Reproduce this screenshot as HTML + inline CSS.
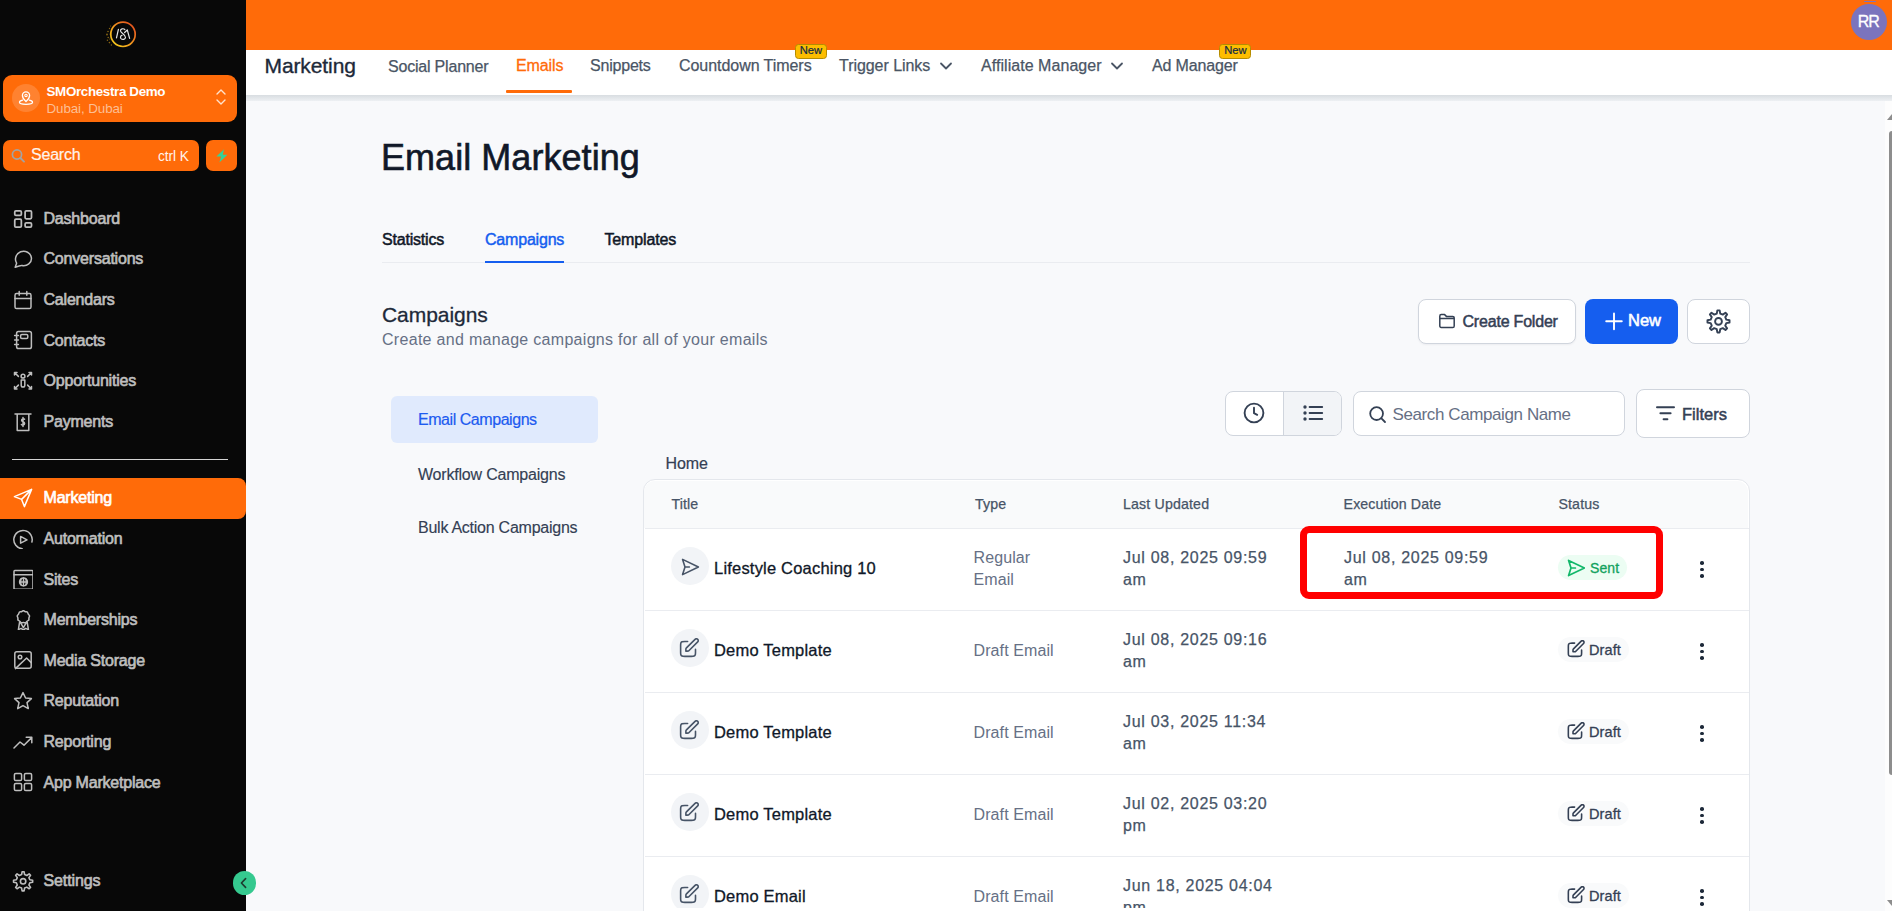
<!DOCTYPE html>
<html><head><meta charset="utf-8"><title>Email Marketing</title>
<style>
html,body{margin:0;padding:0;width:1892px;height:911px;overflow:hidden;background:#f8f9fb}
body{position:relative;font-family:"Liberation Sans", sans-serif}
.t{position:absolute;white-space:nowrap;line-height:1;font-family:"Liberation Sans", sans-serif}
svg{display:block}
</style></head><body>
<div style="position:absolute;left:0px;top:0px;width:1892px;height:911px;background:#f8f9fb"></div>
<div style="position:absolute;left:0px;top:0px;width:246px;height:911px;background:#080808"></div>
<svg style="position:absolute;left:100px;top:18px;" width="40" height="34" viewBox="0 0 40 34" fill="none">
<defs><linearGradient id="lg" x1="0.9" y1="0.1" x2="0.1" y2="0.9"><stop offset="0" stop-color="#e4521e"/><stop offset="0.55" stop-color="#f29a1f"/><stop offset="1" stop-color="#f4c81c"/></linearGradient></defs>
<g fill="#f2b21c" opacity="0.55"><circle cx="9.5" cy="10.5" r="0.7"/><circle cx="8" cy="13.5" r="0.8"/><circle cx="7" cy="16.5" r="0.9"/><circle cx="8.2" cy="19.5" r="0.8"/><circle cx="7.4" cy="22.2" r="0.7"/><circle cx="9.4" cy="24.6" r="0.8"/><circle cx="11.4" cy="27" r="0.7"/><circle cx="10" cy="16" r="0.6"/><circle cx="9.8" cy="21" r="0.6"/><circle cx="10.5" cy="8" r="0.5"/></g>
<circle cx="23" cy="16.3" r="12.2" stroke="url(#lg)" stroke-width="1.7"/>
<g stroke="#e8e8e8" stroke-width="1.2" stroke-linecap="round" stroke-linejoin="round">
<path d="M16.5 19.8 L18.4 11.3"/>
<path d="M24.8 11.5 C23.5 10.2 20.2 10.6 20.5 13 C20.8 15 25.8 16.5 25.5 19.5 C25.3 21.5 22.5 22 21 20.6 C20 19.6 20.6 17.6 22 17.3"/>
<path d="M24.6 14.5 L27.3 12 L29.6 20.4"/>
</g>
</svg>
<div style="position:absolute;left:3px;top:75px;width:234px;height:47px;background:#ff6b09;border-radius:9px"></div>
<div style="position:absolute;left:11.5px;top:83.5px;width:28.5px;height:28.5px;background:rgba(255,255,255,0.16);border-radius:50%"></div>
<svg style="position:absolute;left:17px;top:89px;" width="18" height="18" viewBox="0 0 18 18" fill="none"><path d="M9 12.5 C9 12.5 12.6 9.2 12.6 6.4 A3.6 3.6 0 0 0 5.4 6.4 C5.4 9.2 9 12.5 9 12.5Z" stroke="#fff" stroke-width="1.3"/><circle cx="9" cy="6.4" r="1.2" stroke="#fff" stroke-width="1.1"/><path d="M5.6 11.2 C3.5 11.7 2.5 12.4 2.5 13.2 C2.5 14.5 5.4 15.3 9 15.3 C12.6 15.3 15.5 14.5 15.5 13.2 C15.5 12.4 14.5 11.7 12.4 11.2" stroke="#fff" stroke-width="1.3" stroke-linecap="round"/></svg>
<div class="t" style="left:46.5px;top:85.16px;font-size:13.4px;color:#fff;font-weight:700;letter-spacing:-0.35px;">SMOrchestra Demo</div>
<div class="t" style="left:46.5px;top:102.46px;font-size:13.4px;color:#fdbf94;font-weight:400;letter-spacing:-0.1px;">Dubai, Dubai</div>
<svg style="position:absolute;left:214px;top:86px;" width="14" height="22" viewBox="0 0 14 22" fill="none"><path d="M3 8 L7 4 L11 8" stroke="#ffe2cc" stroke-width="1.4" stroke-linecap="round" stroke-linejoin="round"/><path d="M3 14 L7 18 L11 14" stroke="#ffe2cc" stroke-width="1.4" stroke-linecap="round" stroke-linejoin="round"/></svg>
<div style="position:absolute;left:3px;top:140px;width:196px;height:31px;background:#ff6b09;border-radius:7px"></div>
<svg style="position:absolute;left:10px;top:147px;" width="16" height="18" viewBox="0 0 16 18" fill="none"><circle cx="7" cy="7.5" r="4.6" stroke="#a3a3a3" stroke-width="1.7"/><path d="M10.4 11 L14 14.6" stroke="#a3a3a3" stroke-width="1.9" stroke-linecap="round"/></svg>
<div class="t" style="left:31px;top:146.86px;font-size:16px;color:#fff4ec;font-weight:400;letter-spacing:-0.2px;-webkit-text-stroke:0.2px #fff4ec">Search</div>
<div class="t" style="left:158px;top:149.52px;font-size:13.8px;color:#fff4ec;font-weight:400;letter-spacing:-0.1px;">ctrl K</div>
<div style="position:absolute;left:206px;top:140px;width:31px;height:31px;background:#ff6b09;border-radius:7px"></div>
<svg style="position:absolute;left:215.5px;top:148.5px;" width="12" height="14" viewBox="0 0 12 14" fill="none"><path d="M8 0.3 L0.4 7.4 H5 L3.4 13.6 L11.4 5.8 H6.8 Z" fill="#34d399"/></svg>
<svg style="position:absolute;left:13px;top:208.5px;" width="20" height="20" viewBox="0 0 20 20" fill="none"><g stroke="#bebebe" stroke-width="1.5" stroke-linecap="round" stroke-linejoin="round"><g stroke-width="1.75"><rect x="1.75" y="1.9" width="6.6" height="4.5" rx="1.2"/><rect x="12.1" y="1.9" width="6.4" height="7.9" rx="1.2"/><rect x="1.75" y="10.2" width="6.6" height="8.0" rx="1.2"/><rect x="12.1" y="13.9" width="6.4" height="4.3" rx="1.2"/></g></g></svg>
<div class="t" style="left:43.5px;top:210.86px;font-size:16px;color:#bebebe;font-weight:400;letter-spacing:-0.2px;-webkit-text-stroke:0.65px #bebebe">Dashboard</div>
<svg style="position:absolute;left:13px;top:249.1px;" width="20" height="20" viewBox="0 0 20 20" fill="none"><g stroke="#bebebe" stroke-width="1.5" stroke-linecap="round" stroke-linejoin="round"><path d="M2.2 18.2 L3.6 14.2 C1.2 10.2 2.8 4.6 7.6 2.8 C12.4 1 17.8 3.8 18.4 8.8 C19 13.8 14 17.6 9 16.6 C7.4 16.4 5.6 17 2.2 18.2Z"/></g></svg>
<div class="t" style="left:43.5px;top:251.46px;font-size:16px;color:#bebebe;font-weight:400;letter-spacing:-0.2px;-webkit-text-stroke:0.65px #bebebe">Conversations</div>
<svg style="position:absolute;left:13px;top:289.7px;" width="20" height="20" viewBox="0 0 20 20" fill="none"><g stroke="#bebebe" stroke-width="1.5" stroke-linecap="round" stroke-linejoin="round"><rect x="2" y="3.6" width="16" height="15" rx="1.6"/><path d="M2 8.4 H18 M6.2 1.4 V5.2 M13.8 1.4 V5.2"/></g></svg>
<div class="t" style="left:43.5px;top:292.06px;font-size:16px;color:#bebebe;font-weight:400;letter-spacing:-0.2px;-webkit-text-stroke:0.65px #bebebe">Calendars</div>
<svg style="position:absolute;left:13px;top:330.3px;" width="20" height="20" viewBox="0 0 20 20" fill="none"><g stroke="#bebebe" stroke-width="1.5" stroke-linecap="round" stroke-linejoin="round"><rect x="3.6" y="1.6" width="14.8" height="17" rx="1.8"/><path d="M1.6 5.6 H5.4 M1.6 10 H5.4 M1.6 14.4 H5.4"/><rect x="7.6" y="4.6" width="7.2" height="3.8" rx="1.2"/></g></svg>
<div class="t" style="left:43.5px;top:332.66px;font-size:16px;color:#bebebe;font-weight:400;letter-spacing:-0.2px;-webkit-text-stroke:0.65px #bebebe">Contacts</div>
<svg style="position:absolute;left:13px;top:370.9px;" width="20" height="20" viewBox="0 0 20 20" fill="none"><g stroke="#bebebe" stroke-width="1.5" stroke-linecap="round" stroke-linejoin="round"><circle cx="10" cy="5.2" r="1.9"/><path d="M8.2 9 H11.8 V14.2 C11.8 15.2 11 16 10 16 C9 16 8.2 15.2 8.2 14.2Z"/><path d="M1.5 4 V1.5 H4 M18.5 4 V1.5 H16 M1.5 15.5 V18 H4 M18.5 15.5 V18 H16 M2 2 L5.4 5.4 M18 2 L14.6 5.4 M2 17.5 L5.4 14.1 M18 17.5 L14.6 14.1"/></g></svg>
<div class="t" style="left:43.5px;top:373.26px;font-size:16px;color:#bebebe;font-weight:400;letter-spacing:-0.2px;-webkit-text-stroke:0.65px #bebebe">Opportunities</div>
<svg style="position:absolute;left:13px;top:411.5px;" width="20" height="20" viewBox="0 0 20 20" fill="none"><g stroke="#bebebe" stroke-width="1.5" stroke-linecap="round" stroke-linejoin="round"><path d="M2 2 H18 M4.2 2 V18.5 H15.8 V2"/><path d="M11.6 7.2 C11 6.4 8.6 6.4 8.6 8.2 C8.6 10 11.6 9.6 11.6 11.6 C11.6 13.4 9 13.4 8.4 12.6 M10 5.6 V14.4"/></g></svg>
<div class="t" style="left:43.5px;top:413.86px;font-size:16px;color:#bebebe;font-weight:400;letter-spacing:-0.2px;-webkit-text-stroke:0.65px #bebebe">Payments</div>
<div style="position:absolute;left:12px;top:459px;width:216px;height:1px;background:#d4d4d4"></div>
<div style="position:absolute;left:0px;top:478px;width:246px;height:41px;background:#ff6b09;border-radius:0 8px 8px 0"></div>
<svg style="position:absolute;left:13px;top:488.0px;" width="20" height="20" viewBox="0 0 20 20" fill="none"><g stroke="#ffffff" stroke-width="1.5" stroke-linecap="round" stroke-linejoin="round"><path d="M18.6 1.4 L1.4 8.6 L8.6 11.4 L11.4 18.6 Z M18.6 1.4 L8.6 11.4"/></g></svg>
<div class="t" style="left:43.5px;top:490.36px;font-size:16px;color:#ffffff;font-weight:400;letter-spacing:-0.2px;-webkit-text-stroke:0.65px #ffffff">Marketing</div>
<svg style="position:absolute;left:13px;top:528.6px;" width="20" height="20" viewBox="0 0 20 20" fill="none"><g stroke="#bebebe" stroke-width="1.5" stroke-linecap="round" stroke-linejoin="round"><path d="M18.9 13.0 A9.2 9.2 0 1 0 9.2 19.8"/><path d="M7.6 7.4 L14 10.8 L7.6 14.2Z"/></g></svg>
<div class="t" style="left:43.5px;top:530.96px;font-size:16px;color:#bebebe;font-weight:400;letter-spacing:-0.2px;-webkit-text-stroke:0.65px #bebebe">Automation</div>
<svg style="position:absolute;left:13px;top:569.2px;" width="20" height="20" viewBox="0 0 20 20" fill="none"><g stroke="#bebebe" stroke-width="1.5" stroke-linecap="round" stroke-linejoin="round"><rect x="1" y="1.6" width="19" height="18.6" rx="0.8"/><path d="M1 5.8 H20"/><circle cx="10.5" cy="12.9" r="3.9"/><path d="M6.6 12.9 H14.4 M10.5 9 V16.8 M8.2 9.8 C7.4 11.6 7.4 14.2 8.2 16 M12.8 9.8 C13.6 11.6 13.6 14.2 12.8 16"/></g></svg>
<div class="t" style="left:43.5px;top:571.56px;font-size:16px;color:#bebebe;font-weight:400;letter-spacing:-0.2px;-webkit-text-stroke:0.65px #bebebe">Sites</div>
<svg style="position:absolute;left:13px;top:609.8px;" width="20" height="20" viewBox="0 0 20 20" fill="none"><g stroke="#bebebe" stroke-width="1.5" stroke-linecap="round" stroke-linejoin="round"><path d="M9.48 1.06 Q10.40 0.30 11.32 1.06 Q12.25 1.83 13.44 1.83 Q14.64 1.84 14.86 3.02 Q15.08 4.20 15.99 4.98 Q16.90 5.75 16.31 6.80 Q15.72 7.84 15.92 9.02 Q16.12 10.20 14.99 10.62 Q13.87 11.04 13.26 12.07 Q12.66 13.10 11.53 12.70 Q10.40 12.30 9.27 12.70 Q8.14 13.10 7.54 12.07 Q6.93 11.04 5.81 10.62 Q4.68 10.20 4.88 9.02 Q5.08 7.84 4.49 6.80 Q3.90 5.75 4.81 4.98 Q5.72 4.20 5.94 3.02 Q6.16 1.84 7.36 1.83 Q8.55 1.83 9.48 1.06Z"/><path d="M6.6 12 L5.4 19.6 L8.2 18.4 L10.4 20.2 L12.6 18.4 L15.4 19.6 L14.2 12 M7.8 13.2 L10.4 17.6 L13 13.2"/></g></svg>
<div class="t" style="left:43.5px;top:612.16px;font-size:16px;color:#bebebe;font-weight:400;letter-spacing:-0.2px;-webkit-text-stroke:0.65px #bebebe">Memberships</div>
<svg style="position:absolute;left:13px;top:650.4px;" width="20" height="20" viewBox="0 0 20 20" fill="none"><g stroke="#bebebe" stroke-width="1.5" stroke-linecap="round" stroke-linejoin="round"><rect x="1.8" y="1.8" width="16.4" height="16.4" rx="2"/><circle cx="7" cy="7" r="1.8"/><path d="M18.2 12.6 L13.6 8 L2.4 18.6"/></g></svg>
<div class="t" style="left:43.5px;top:652.76px;font-size:16px;color:#bebebe;font-weight:400;letter-spacing:-0.2px;-webkit-text-stroke:0.65px #bebebe">Media Storage</div>
<svg style="position:absolute;left:13px;top:691.0px;" width="20" height="20" viewBox="0 0 20 20" fill="none"><g stroke="#bebebe" stroke-width="1.5" stroke-linecap="round" stroke-linejoin="round"><path d="M10 1.6 L12.6 7 L18.4 7.6 L14 11.6 L15.3 17.6 L10 14.6 L4.7 17.6 L6 11.6 L1.6 7.6 L7.4 7 Z"/></g></svg>
<div class="t" style="left:43.5px;top:693.36px;font-size:16px;color:#bebebe;font-weight:400;letter-spacing:-0.2px;-webkit-text-stroke:0.65px #bebebe">Reputation</div>
<svg style="position:absolute;left:13px;top:731.6px;" width="20" height="20" viewBox="0 0 20 20" fill="none"><g stroke="#bebebe" stroke-width="1.5" stroke-linecap="round" stroke-linejoin="round"><path d="M1 16 L7 10 L11 13.2 L18.6 5.6 M13.2 5.2 H18.8 V10.8"/></g></svg>
<div class="t" style="left:43.5px;top:733.96px;font-size:16px;color:#bebebe;font-weight:400;letter-spacing:-0.2px;-webkit-text-stroke:0.65px #bebebe">Reporting</div>
<svg style="position:absolute;left:13px;top:772.2px;" width="20" height="20" viewBox="0 0 20 20" fill="none"><g stroke="#bebebe" stroke-width="1.5" stroke-linecap="round" stroke-linejoin="round"><rect x="1.4" y="1.4" width="7.2" height="7.2" rx="1.4"/><rect x="11.4" y="1.4" width="7.2" height="7.2" rx="1.4"/><rect x="1.4" y="11.4" width="7.2" height="7.2" rx="1.4"/><rect x="11.4" y="11.4" width="7.2" height="7.2" rx="1.4"/></g></svg>
<div class="t" style="left:43.5px;top:774.56px;font-size:16px;color:#bebebe;font-weight:400;letter-spacing:-0.2px;-webkit-text-stroke:0.65px #bebebe">App Marketplace</div>
<svg style="position:absolute;left:12px;top:870px;" width="22" height="22" viewBox="0 0 22 22" fill="none"><g stroke="#bebebe" stroke-width="1.6" stroke-linejoin="round"><path d="M10.10 1.75 L12.10 1.75 L12.59 4.56 L14.81 5.48 L17.14 3.84 L18.56 5.26 L16.92 7.59 L17.84 9.81 L20.65 10.30 L20.65 12.30 L17.84 12.79 L16.92 15.01 L18.56 17.34 L17.14 18.76 L14.81 17.12 L12.59 18.04 L12.10 20.85 L10.10 20.85 L9.61 18.04 L7.39 17.12 L5.06 18.76 L3.64 17.34 L5.28 15.01 L4.36 12.79 L1.55 12.30 L1.55 10.30 L4.36 9.81 L5.28 7.59 L3.64 5.26 L5.06 3.84 L7.39 5.48 L9.61 4.56Z"/><circle cx="11.1" cy="11.3" r="2.7"/></g></svg>
<div class="t" style="left:43.5px;top:872.86px;font-size:16px;color:#bebebe;font-weight:400;letter-spacing:-0.1px;-webkit-text-stroke:0.65px #bebebe">Settings</div>
<div style="position:absolute;left:246px;top:0px;width:1646px;height:50px;background:#ff6b09"></div>
<div style="position:absolute;left:1851px;top:4px;width:36px;height:36px;background:#7b74bd;border-radius:50%"></div>
<div class="t" style="left:1857.8px;top:14.26px;font-size:16px;color:#fff;font-weight:400;letter-spacing:-1.0px;-webkit-text-stroke:0.3px #fff">RR</div>
<div style="position:absolute;left:1864px;top:0.5px;width:12px;height:1.2px;background:#7b74bd;border-radius:1px"></div>
<div style="position:absolute;left:246px;top:50px;width:1646px;height:45px;background:#fff"></div>
<div style="position:absolute;left:246px;top:95px;width:1646px;height:6px;background:linear-gradient(#d8dde1,#edf0f3)"></div>
<div class="t" style="left:264.5px;top:54.62px;font-size:21px;color:#1d2939;font-weight:400;letter-spacing:-0.1px;-webkit-text-stroke:0.35px #1d2939">Marketing</div>
<div class="t" style="left:388px;top:58.56px;font-size:16px;color:#4a5565;font-weight:400;letter-spacing:-0.2px;-webkit-text-stroke:0.25px #4a5565">Social Planner</div>
<div class="t" style="left:516px;top:57.66px;font-size:16px;color:#ff6b09;font-weight:400;letter-spacing:-0.1px;-webkit-text-stroke:0.3px #ff6b09">Emails</div>
<div style="position:absolute;left:506px;top:90px;width:66px;height:2.5px;background:#ff6b09;border-radius:1px"></div>
<div class="t" style="left:590px;top:58.36px;font-size:16px;color:#4a5565;font-weight:400;letter-spacing:-0.2px;-webkit-text-stroke:0.25px #4a5565">Snippets</div>
<div class="t" style="left:679px;top:58.36px;font-size:16px;color:#4a5565;font-weight:400;letter-spacing:-0.05px;-webkit-text-stroke:0.25px #4a5565">Countdown Timers</div>
<div class="t" style="left:839px;top:58.36px;font-size:16px;color:#4a5565;font-weight:400;letter-spacing:-0.05px;-webkit-text-stroke:0.25px #4a5565">Trigger Links</div>
<svg style="position:absolute;left:939px;top:60px;" width="14" height="12" viewBox="0 0 14 12" fill="none"><path d="M2 3.5 L7 8.5 L12 3.5" stroke="#4a5565" stroke-width="1.8" stroke-linecap="round" stroke-linejoin="round"/></svg>
<div class="t" style="left:981px;top:58.36px;font-size:16px;color:#4a5565;font-weight:400;letter-spacing:0.05px;-webkit-text-stroke:0.25px #4a5565">Affiliate Manager</div>
<svg style="position:absolute;left:1110px;top:60px;" width="14" height="12" viewBox="0 0 14 12" fill="none"><path d="M2 3.5 L7 8.5 L12 3.5" stroke="#4a5565" stroke-width="1.8" stroke-linecap="round" stroke-linejoin="round"/></svg>
<div class="t" style="left:1152px;top:58.36px;font-size:16px;color:#4a5565;font-weight:400;letter-spacing:-0.15px;-webkit-text-stroke:0.25px #4a5565">Ad Manager</div>
<div style="position:absolute;left:794.5px;top:44.3px;width:32px;height:14.5px;background:#fdbd00;border:1.2px solid #b58c00;border-radius:3.5px;box-sizing:border-box"></div>
<div class="t" style="left:799.8px;top:44.72px;font-size:11.2px;color:#0f2a48;font-weight:400;letter-spacing:-0.1px;-webkit-text-stroke:0.2px #0f2a48">New</div>
<div style="position:absolute;left:1219.0px;top:44.3px;width:32px;height:14.5px;background:#fdbd00;border:1.2px solid #b58c00;border-radius:3.5px;box-sizing:border-box"></div>
<div class="t" style="left:1224.3px;top:44.72px;font-size:11.2px;color:#0f2a48;font-weight:400;letter-spacing:-0.1px;-webkit-text-stroke:0.2px #0f2a48">New</div>
<div style="position:absolute;left:1885px;top:101px;width:7px;height:810px;background:#fdfdfd"></div>
<div style="position:absolute;left:1889px;top:131px;width:6px;height:644px;background:#8d8d8d;border-radius:3px"></div>
<svg style="position:absolute;left:1884px;top:113px;" width="8" height="8" viewBox="0 0 8 8" fill="none"><path d="M8 1 L3 7 H8Z" fill="#8d8d8d"/></svg>
<svg style="position:absolute;left:1884px;top:899px;" width="8" height="8" viewBox="0 0 8 8" fill="none"><path d="M8 7 L3 1 H8Z" fill="#8d8d8d"/></svg>
<div class="t" style="left:381px;top:139.73px;font-size:36px;color:#101828;font-weight:400;letter-spacing:0.05px;-webkit-text-stroke:0.6px #101828">Email Marketing</div>
<div class="t" style="left:382px;top:231.76px;font-size:16px;color:#101828;font-weight:400;letter-spacing:-0.2px;-webkit-text-stroke:0.5px #101828">Statistics</div>
<div class="t" style="left:485px;top:231.76px;font-size:16px;color:#155eef;font-weight:400;letter-spacing:-0.2px;-webkit-text-stroke:0.45px #155eef">Campaigns</div>
<div class="t" style="left:604.5px;top:231.76px;font-size:16px;color:#101828;font-weight:400;letter-spacing:-0.15px;-webkit-text-stroke:0.5px #101828">Templates</div>
<div style="position:absolute;left:382px;top:261.5px;width:1368px;height:1px;background:#eaecf0"></div>
<div style="position:absolute;left:485px;top:260.5px;width:79px;height:2.5px;background:#155eef"></div>
<div class="t" style="left:382px;top:304.32px;font-size:21px;color:#1d2939;font-weight:400;letter-spacing:-0.05px;-webkit-text-stroke:0.3px #1d2939">Campaigns</div>
<div class="t" style="left:382px;top:332.46px;font-size:16px;color:#667085;font-weight:400;letter-spacing:0.3px;">Create and manage campaigns for all of your emails</div>
<div style="position:absolute;left:1418px;top:299px;width:157.5px;height:45px;background:#fff;border:1px solid #d0d5dd;border-radius:8px;box-sizing:border-box;box-shadow:0 1px 2px rgba(16,24,40,.05)"></div>
<svg style="position:absolute;left:1437px;top:311px;" width="20" height="20" viewBox="0 0 20 20" fill="none"><path d="M2.8 5.2 C2.8 4.4 3.4 3.6 4.2 3.6 H7.6 L9.4 5.4 H15.8 C16.6 5.4 17.2 6 17.2 6.8 V15 C17.2 15.8 16.6 16.6 15.8 16.6 H4.2 C3.4 16.6 2.8 15.8 2.8 15 Z M2.8 7.4 H17.2" stroke="#344054" stroke-width="1.5" stroke-linejoin="round"/></svg>
<div class="t" style="left:1462.5px;top:314.46px;font-size:16px;color:#344054;font-weight:400;letter-spacing:-0.2px;-webkit-text-stroke:0.5px #344054">Create Folder</div>
<div style="position:absolute;left:1585px;top:299px;width:93px;height:45px;background:#155eef;border-radius:8px"></div>
<svg style="position:absolute;left:1604px;top:311px;" width="20" height="20" viewBox="0 0 20 20" fill="none"><path d="M10 2.4 V18.2 M2.2 10.2 H17.8" stroke="#fff" stroke-width="1.9" stroke-linecap="round"/></svg>
<div class="t" style="left:1628px;top:311.83px;font-size:16.5px;color:#fff;font-weight:400;letter-spacing:0px;-webkit-text-stroke:0.55px #fff">New</div>
<div style="position:absolute;left:1687px;top:299px;width:62.5px;height:45px;background:#fff;border:1px solid #d0d5dd;border-radius:8px;box-sizing:border-box"></div>
<svg style="position:absolute;left:1705px;top:308px;" width="27" height="27" viewBox="0 0 27 27" fill="none"><g stroke="#344054" stroke-width="1.9" stroke-linejoin="round"><path d="M12.34 2.36 L14.66 2.36 L15.23 5.59 L17.80 6.65 L20.49 4.77 L22.13 6.41 L20.25 9.10 L21.31 11.67 L24.54 12.24 L24.54 14.56 L21.31 15.13 L20.25 17.70 L22.13 20.39 L20.49 22.03 L17.80 20.15 L15.23 21.21 L14.66 24.44 L12.34 24.44 L11.77 21.21 L9.20 20.15 L6.51 22.03 L4.87 20.39 L6.75 17.70 L5.69 15.13 L2.46 14.56 L2.46 12.24 L5.69 11.67 L6.75 9.10 L4.87 6.41 L6.51 4.77 L9.20 6.65 L11.77 5.59Z"/><circle cx="13.5" cy="13.4" r="3.4"/></g></svg>
<div style="position:absolute;left:1225px;top:391px;width:116.5px;height:44.5px;background:#fff;border:1px solid #d0d5dd;border-radius:8px;box-sizing:border-box;overflow:hidden"></div>
<div style="position:absolute;left:1283px;top:392px;width:57.5px;height:42.5px;background:#f2f4f7;border-radius:0 7px 7px 0;border-left:1px solid #d0d5dd;box-sizing:border-box"></div>
<svg style="position:absolute;left:1243px;top:402px;" width="22" height="22" viewBox="0 0 22 22" fill="none"><circle cx="11" cy="11" r="9.4" stroke="#344054" stroke-width="1.9"/><path d="M11 5.8 V11.2 L14.2 12.8" stroke="#344054" stroke-width="1.9" stroke-linecap="round" stroke-linejoin="round"/></svg>
<svg style="position:absolute;left:1302px;top:404px;" width="22" height="18" viewBox="0 0 22 18" fill="none"><g fill="#344054"><circle cx="3" cy="3" r="1.7"/><circle cx="3" cy="9" r="1.7"/><circle cx="3" cy="15" r="1.7"/></g><path d="M7.6 3 H20.2 M7.6 9 H20.2 M7.6 15 H20.2" stroke="#344054" stroke-width="1.9" stroke-linecap="round"/></svg>
<div style="position:absolute;left:1353px;top:391px;width:271.5px;height:44.5px;background:#fff;border:1px solid #d0d5dd;border-radius:8px;box-sizing:border-box"></div>
<svg style="position:absolute;left:1368px;top:405px;" width="20" height="20" viewBox="0 0 20 20" fill="none"><circle cx="8.6" cy="8.6" r="6.4" stroke="#344054" stroke-width="1.8"/><path d="M13.4 13.4 L17 17" stroke="#344054" stroke-width="1.8" stroke-linecap="round"/></svg>
<div class="t" style="left:1392.5px;top:405.81px;font-size:17px;color:#667085;font-weight:400;letter-spacing:-0.4px;">Search Campaign Name</div>
<div style="position:absolute;left:1636px;top:389px;width:113.5px;height:48.5px;background:#fff;border:1px solid #d0d5dd;border-radius:8px;box-sizing:border-box"></div>
<svg style="position:absolute;left:1655px;top:404px;" width="21" height="18" viewBox="0 0 21 18" fill="none"><path d="M2 3.2 H19 M5.4 9.2 H15.6 M8.6 15.2 H12.4" stroke="#344054" stroke-width="2" stroke-linecap="round"/></svg>
<div class="t" style="left:1682px;top:406.03px;font-size:16.5px;color:#344054;font-weight:400;letter-spacing:0px;-webkit-text-stroke:0.5px #344054">Filters</div>
<div style="position:absolute;left:391px;top:396px;width:207px;height:47px;background:#e0eafd;border-radius:6px"></div>
<div class="t" style="left:418px;top:411.86px;font-size:16px;color:#1d5bf0;font-weight:400;letter-spacing:-0.45px;-webkit-text-stroke:0.2px #1d5bf0">Email Campaigns</div>
<div class="t" style="left:418px;top:466.76px;font-size:16px;color:#344054;font-weight:400;letter-spacing:-0.2px;-webkit-text-stroke:0.15px #344054">Workflow Campaigns</div>
<div class="t" style="left:418px;top:519.56px;font-size:16px;color:#344054;font-weight:400;letter-spacing:-0.25px;-webkit-text-stroke:0.15px #344054">Bulk Action Campaigns</div>
<div class="t" style="left:665.5px;top:455.76px;font-size:16px;color:#344054;font-weight:400;letter-spacing:-0.1px;-webkit-text-stroke:0.2px #344054">Home</div>
<div style="position:absolute;left:642.5px;top:479px;width:1107px;height:460px;background:#fff;border:1.5px solid #e4e7ec;border-radius:12px;box-sizing:border-box;overflow:hidden"></div>
<div style="position:absolute;left:644px;top:480.5px;width:1104px;height:47.5px;background:#f9fafb;border-radius:11px 11px 0 0"></div>
<div style="position:absolute;left:644.5px;top:528px;width:1104px;height:1px;background:#eaecf0"></div>
<div class="t" style="left:671.5px;top:497.18px;font-size:14.2px;color:#475467;font-weight:400;letter-spacing:0.1px;-webkit-text-stroke:0.25px #475467">Title</div>
<div class="t" style="left:975px;top:497.18px;font-size:14.2px;color:#475467;font-weight:400;letter-spacing:0.1px;-webkit-text-stroke:0.25px #475467">Type</div>
<div class="t" style="left:1123px;top:497.18px;font-size:14.2px;color:#475467;font-weight:400;letter-spacing:0.15px;-webkit-text-stroke:0.25px #475467">Last Updated</div>
<div class="t" style="left:1343.6px;top:497.18px;font-size:14.2px;color:#475467;font-weight:400;letter-spacing:0.1px;-webkit-text-stroke:0.25px #475467">Execution Date</div>
<div class="t" style="left:1558.4px;top:497.18px;font-size:14.2px;color:#475467;font-weight:400;letter-spacing:0.15px;-webkit-text-stroke:0.25px #475467">Status</div>
<div style="position:absolute;left:671px;top:547px;width:38px;height:38px;background:#f2f4f7;border-radius:50%"></div>
<svg style="position:absolute;left:679.5px;top:556.5px;" width="21" height="21" viewBox="0 0 21 21" fill="none"><path d="M2.6 2.4 L18.4 10 L2.6 17.6 L5 10 Z M5 10 H9.4" stroke="#475467" stroke-width="1.6" stroke-linejoin="round" stroke-linecap="round"/></svg>
<div class="t" style="left:714px;top:559.93px;font-size:16.5px;color:#101828;font-weight:400;letter-spacing:0.2px;-webkit-text-stroke:0.3px #101828">Lifestyle Coaching 10</div>
<div class="t" style="left:973.5px;top:550.46px;font-size:16px;color:#667085;font-weight:400;letter-spacing:0.1px;">Regular</div>
<div class="t" style="left:973.5px;top:572.46px;font-size:16px;color:#667085;font-weight:400;letter-spacing:0.1px;">Email</div>
<div class="t" style="left:1123px;top:550.46px;font-size:16px;color:#475467;font-weight:400;letter-spacing:0.7px;-webkit-text-stroke:0.25px #475467">Jul 08, 2025 09:59</div>
<div class="t" style="left:1123px;top:572.46px;font-size:16px;color:#475467;font-weight:400;letter-spacing:0.5px;-webkit-text-stroke:0.25px #475467">am</div>
<div class="t" style="left:1344px;top:550.46px;font-size:16px;color:#475467;font-weight:400;letter-spacing:0.7px;-webkit-text-stroke:0.25px #475467">Jul 08, 2025 09:59</div>
<div class="t" style="left:1344px;top:572.46px;font-size:16px;color:#475467;font-weight:400;letter-spacing:0.5px;-webkit-text-stroke:0.25px #475467">am</div>
<div style="position:absolute;left:1558px;top:555px;width:69px;height:25px;background:#ecfdf3;border-radius:13px"></div>
<svg style="position:absolute;left:1566px;top:558px;" width="19" height="19" viewBox="0 0 19 19" fill="none"><path d="M2.6 2.4 L18.4 10 L2.6 17.6 L5 10 Z M5 10 H9.4" stroke="#12b76a" stroke-width="1.7" stroke-linejoin="round" stroke-linecap="round"/></svg>
<div class="t" style="left:1590px;top:561.25px;font-size:14px;color:#12a25e;font-weight:400;letter-spacing:0.1px;-webkit-text-stroke:0.3px #12a25e">Sent</div>
<div style="position:absolute;left:1700.2px;top:561.2px;width:3.6px;height:3.6px;background:#1d2939;border-radius:50%"></div>
<div style="position:absolute;left:1700.2px;top:567.7px;width:3.6px;height:3.6px;background:#1d2939;border-radius:50%"></div>
<div style="position:absolute;left:1700.2px;top:574.2px;width:3.6px;height:3.6px;background:#1d2939;border-radius:50%"></div>
<div style="position:absolute;left:644.5px;top:610px;width:1104px;height:1px;background:#eaecf0"></div>
<div style="position:absolute;left:671px;top:629px;width:38px;height:38px;background:#f2f4f7;border-radius:50%"></div>
<svg style="position:absolute;left:678px;top:637.5px;" width="22" height="22" viewBox="0 0 22 22" fill="none"><g transform="scale(0.875)"><path d="M11 4H7.8C6.12 4 5.28 4 4.64 4.33C4.07 4.61 3.61 5.07 3.33 5.64C3 6.28 3 7.12 3 8.8V16.2C3 17.88 3 18.72 3.33 19.36C3.61 19.930 4.07 20.39 4.64 20.67C5.28 21 6.12 21 7.8 21H15.2C16.88 21 17.72 21 18.36 20.67C18.93 20.39 19.39 19.93 19.67 19.36C20 18.72 20 17.88 20 16.2V13M9 15H10.67C11.16 15 11.4 15 11.63 14.94C11.84 14.89 12.03 14.81 12.21 14.7C12.41 14.58 12.58 14.41 12.93 14.06L22.5 4.5C23.33 3.67 23.33 2.33 22.5 1.5C21.67 0.67 20.33 0.67 19.5 1.5L9.93 11.07C9.58 11.42 9.41 11.59 9.29 11.79C9.18 11.97 9.1 12.16 9.050 12.37C9 12.6 9 12.84 9 13.32V15Z" stroke="#475467" stroke-width="1.83" stroke-linecap="round" stroke-linejoin="round"/></g></svg>
<div class="t" style="left:714px;top:641.93px;font-size:16.5px;color:#101828;font-weight:400;letter-spacing:0.2px;-webkit-text-stroke:0.3px #101828">Demo Template</div>
<div class="t" style="left:973.5px;top:643.26px;font-size:16px;color:#667085;font-weight:400;letter-spacing:0.1px;">Draft Email</div>
<div class="t" style="left:1123px;top:632.46px;font-size:16px;color:#475467;font-weight:400;letter-spacing:0.7px;-webkit-text-stroke:0.25px #475467">Jul 08, 2025 09:16</div>
<div class="t" style="left:1123px;top:654.46px;font-size:16px;color:#475467;font-weight:400;letter-spacing:0.5px;-webkit-text-stroke:0.25px #475467">am</div>
<div style="position:absolute;left:1558px;top:637px;width:71px;height:25px;background:#f9fafb;border-radius:13px"></div>
<svg style="position:absolute;left:1566px;top:640.2px;" width="20" height="20" viewBox="0 0 20 20" fill="none"><g transform="scale(0.78)"><path d="M11 4H7.8C6.12 4 5.28 4 4.64 4.33C4.07 4.61 3.61 5.07 3.33 5.64C3 6.28 3 7.12 3 8.8V16.2C3 17.88 3 18.72 3.33 19.36C3.61 19.930 4.07 20.39 4.64 20.67C5.28 21 6.12 21 7.8 21H15.2C16.88 21 17.72 21 18.36 20.67C18.93 20.39 19.39 19.93 19.67 19.36C20 18.72 20 17.88 20 16.2V13M9 15H10.67C11.16 15 11.4 15 11.63 14.94C11.84 14.89 12.03 14.81 12.21 14.7C12.41 14.58 12.58 14.41 12.93 14.06L22.5 4.5C23.33 3.67 23.33 2.33 22.5 1.5C21.67 0.67 20.33 0.67 19.5 1.5L9.93 11.07C9.58 11.42 9.41 11.59 9.29 11.79C9.18 11.97 9.1 12.16 9.050 12.37C9 12.6 9 12.84 9 13.32V15Z" stroke="#344054" stroke-width="2.05" stroke-linecap="round" stroke-linejoin="round"/></g></svg>
<div class="t" style="left:1589px;top:642.83px;font-size:14.5px;color:#344054;font-weight:400;letter-spacing:0.1px;-webkit-text-stroke:0.3px #344054">Draft</div>
<div style="position:absolute;left:1700.2px;top:643.2px;width:3.6px;height:3.6px;background:#1d2939;border-radius:50%"></div>
<div style="position:absolute;left:1700.2px;top:649.7px;width:3.6px;height:3.6px;background:#1d2939;border-radius:50%"></div>
<div style="position:absolute;left:1700.2px;top:656.2px;width:3.6px;height:3.6px;background:#1d2939;border-radius:50%"></div>
<div style="position:absolute;left:644.5px;top:692px;width:1104px;height:1px;background:#eaecf0"></div>
<div style="position:absolute;left:671px;top:711px;width:38px;height:38px;background:#f2f4f7;border-radius:50%"></div>
<svg style="position:absolute;left:678px;top:719.5px;" width="22" height="22" viewBox="0 0 22 22" fill="none"><g transform="scale(0.875)"><path d="M11 4H7.8C6.12 4 5.28 4 4.64 4.33C4.07 4.61 3.61 5.07 3.33 5.64C3 6.28 3 7.12 3 8.8V16.2C3 17.88 3 18.72 3.33 19.36C3.61 19.930 4.07 20.39 4.64 20.67C5.28 21 6.12 21 7.8 21H15.2C16.88 21 17.72 21 18.36 20.67C18.93 20.39 19.39 19.93 19.67 19.36C20 18.72 20 17.88 20 16.2V13M9 15H10.67C11.16 15 11.4 15 11.63 14.94C11.84 14.89 12.03 14.81 12.21 14.7C12.41 14.58 12.58 14.41 12.93 14.06L22.5 4.5C23.33 3.67 23.33 2.33 22.5 1.5C21.67 0.67 20.33 0.67 19.5 1.5L9.93 11.07C9.58 11.42 9.41 11.59 9.29 11.79C9.18 11.97 9.1 12.16 9.050 12.37C9 12.6 9 12.84 9 13.32V15Z" stroke="#475467" stroke-width="1.83" stroke-linecap="round" stroke-linejoin="round"/></g></svg>
<div class="t" style="left:714px;top:723.93px;font-size:16.5px;color:#101828;font-weight:400;letter-spacing:0.2px;-webkit-text-stroke:0.3px #101828">Demo Template</div>
<div class="t" style="left:973.5px;top:725.26px;font-size:16px;color:#667085;font-weight:400;letter-spacing:0.1px;">Draft Email</div>
<div class="t" style="left:1123px;top:714.46px;font-size:16px;color:#475467;font-weight:400;letter-spacing:0.7px;-webkit-text-stroke:0.25px #475467">Jul 03, 2025 11:34</div>
<div class="t" style="left:1123px;top:736.46px;font-size:16px;color:#475467;font-weight:400;letter-spacing:0.5px;-webkit-text-stroke:0.25px #475467">am</div>
<div style="position:absolute;left:1558px;top:719px;width:71px;height:25px;background:#f9fafb;border-radius:13px"></div>
<svg style="position:absolute;left:1566px;top:722.2px;" width="20" height="20" viewBox="0 0 20 20" fill="none"><g transform="scale(0.78)"><path d="M11 4H7.8C6.12 4 5.28 4 4.64 4.33C4.07 4.61 3.61 5.07 3.33 5.64C3 6.28 3 7.12 3 8.8V16.2C3 17.88 3 18.72 3.33 19.36C3.61 19.930 4.07 20.39 4.64 20.67C5.28 21 6.12 21 7.8 21H15.2C16.88 21 17.72 21 18.36 20.67C18.93 20.39 19.39 19.93 19.67 19.36C20 18.72 20 17.88 20 16.2V13M9 15H10.67C11.16 15 11.4 15 11.63 14.94C11.84 14.89 12.03 14.81 12.21 14.7C12.41 14.58 12.58 14.41 12.93 14.06L22.5 4.5C23.33 3.67 23.33 2.33 22.5 1.5C21.67 0.67 20.33 0.67 19.5 1.5L9.93 11.07C9.58 11.42 9.41 11.59 9.29 11.79C9.18 11.97 9.1 12.16 9.050 12.37C9 12.6 9 12.84 9 13.32V15Z" stroke="#344054" stroke-width="2.05" stroke-linecap="round" stroke-linejoin="round"/></g></svg>
<div class="t" style="left:1589px;top:724.83px;font-size:14.5px;color:#344054;font-weight:400;letter-spacing:0.1px;-webkit-text-stroke:0.3px #344054">Draft</div>
<div style="position:absolute;left:1700.2px;top:725.2px;width:3.6px;height:3.6px;background:#1d2939;border-radius:50%"></div>
<div style="position:absolute;left:1700.2px;top:731.7px;width:3.6px;height:3.6px;background:#1d2939;border-radius:50%"></div>
<div style="position:absolute;left:1700.2px;top:738.2px;width:3.6px;height:3.6px;background:#1d2939;border-radius:50%"></div>
<div style="position:absolute;left:644.5px;top:774px;width:1104px;height:1px;background:#eaecf0"></div>
<div style="position:absolute;left:671px;top:793px;width:38px;height:38px;background:#f2f4f7;border-radius:50%"></div>
<svg style="position:absolute;left:678px;top:801.5px;" width="22" height="22" viewBox="0 0 22 22" fill="none"><g transform="scale(0.875)"><path d="M11 4H7.8C6.12 4 5.28 4 4.64 4.33C4.07 4.61 3.61 5.07 3.33 5.64C3 6.28 3 7.12 3 8.8V16.2C3 17.88 3 18.72 3.33 19.36C3.61 19.930 4.07 20.39 4.64 20.67C5.28 21 6.12 21 7.8 21H15.2C16.88 21 17.72 21 18.36 20.67C18.93 20.39 19.39 19.93 19.67 19.36C20 18.72 20 17.88 20 16.2V13M9 15H10.67C11.16 15 11.4 15 11.63 14.94C11.84 14.89 12.03 14.81 12.21 14.7C12.41 14.58 12.58 14.41 12.93 14.06L22.5 4.5C23.33 3.67 23.33 2.33 22.5 1.5C21.67 0.67 20.33 0.67 19.5 1.5L9.93 11.07C9.58 11.42 9.41 11.59 9.29 11.79C9.18 11.97 9.1 12.16 9.050 12.37C9 12.6 9 12.84 9 13.32V15Z" stroke="#475467" stroke-width="1.83" stroke-linecap="round" stroke-linejoin="round"/></g></svg>
<div class="t" style="left:714px;top:805.93px;font-size:16.5px;color:#101828;font-weight:400;letter-spacing:0.2px;-webkit-text-stroke:0.3px #101828">Demo Template</div>
<div class="t" style="left:973.5px;top:807.26px;font-size:16px;color:#667085;font-weight:400;letter-spacing:0.1px;">Draft Email</div>
<div class="t" style="left:1123px;top:796.46px;font-size:16px;color:#475467;font-weight:400;letter-spacing:0.7px;-webkit-text-stroke:0.25px #475467">Jul 02, 2025 03:20</div>
<div class="t" style="left:1123px;top:818.46px;font-size:16px;color:#475467;font-weight:400;letter-spacing:0.5px;-webkit-text-stroke:0.25px #475467">pm</div>
<div style="position:absolute;left:1558px;top:801px;width:71px;height:25px;background:#f9fafb;border-radius:13px"></div>
<svg style="position:absolute;left:1566px;top:804.2px;" width="20" height="20" viewBox="0 0 20 20" fill="none"><g transform="scale(0.78)"><path d="M11 4H7.8C6.12 4 5.28 4 4.64 4.33C4.07 4.61 3.61 5.07 3.33 5.64C3 6.28 3 7.12 3 8.8V16.2C3 17.88 3 18.72 3.33 19.36C3.61 19.930 4.07 20.39 4.64 20.67C5.28 21 6.12 21 7.8 21H15.2C16.88 21 17.72 21 18.36 20.67C18.93 20.39 19.39 19.93 19.67 19.36C20 18.72 20 17.88 20 16.2V13M9 15H10.67C11.16 15 11.4 15 11.63 14.94C11.84 14.89 12.03 14.81 12.21 14.7C12.41 14.58 12.58 14.41 12.93 14.06L22.5 4.5C23.33 3.67 23.33 2.33 22.5 1.5C21.67 0.67 20.33 0.67 19.5 1.5L9.93 11.07C9.58 11.42 9.41 11.59 9.29 11.79C9.18 11.97 9.1 12.16 9.050 12.37C9 12.6 9 12.84 9 13.32V15Z" stroke="#344054" stroke-width="2.05" stroke-linecap="round" stroke-linejoin="round"/></g></svg>
<div class="t" style="left:1589px;top:806.83px;font-size:14.5px;color:#344054;font-weight:400;letter-spacing:0.1px;-webkit-text-stroke:0.3px #344054">Draft</div>
<div style="position:absolute;left:1700.2px;top:807.2px;width:3.6px;height:3.6px;background:#1d2939;border-radius:50%"></div>
<div style="position:absolute;left:1700.2px;top:813.7px;width:3.6px;height:3.6px;background:#1d2939;border-radius:50%"></div>
<div style="position:absolute;left:1700.2px;top:820.2px;width:3.6px;height:3.6px;background:#1d2939;border-radius:50%"></div>
<div style="position:absolute;left:644.5px;top:856px;width:1104px;height:1px;background:#eaecf0"></div>
<div style="position:absolute;left:671px;top:875px;width:38px;height:38px;background:#f2f4f7;border-radius:50%"></div>
<svg style="position:absolute;left:678px;top:883.5px;" width="22" height="22" viewBox="0 0 22 22" fill="none"><g transform="scale(0.875)"><path d="M11 4H7.8C6.12 4 5.28 4 4.64 4.33C4.07 4.61 3.61 5.07 3.33 5.64C3 6.28 3 7.12 3 8.8V16.2C3 17.88 3 18.72 3.33 19.36C3.61 19.930 4.07 20.39 4.64 20.67C5.28 21 6.12 21 7.8 21H15.2C16.88 21 17.72 21 18.36 20.67C18.93 20.39 19.39 19.93 19.67 19.36C20 18.72 20 17.88 20 16.2V13M9 15H10.67C11.16 15 11.4 15 11.63 14.94C11.84 14.89 12.03 14.81 12.21 14.7C12.41 14.58 12.58 14.41 12.93 14.06L22.5 4.5C23.33 3.67 23.33 2.33 22.5 1.5C21.67 0.67 20.33 0.67 19.5 1.5L9.93 11.07C9.58 11.42 9.41 11.59 9.29 11.79C9.18 11.97 9.1 12.16 9.050 12.37C9 12.6 9 12.84 9 13.32V15Z" stroke="#475467" stroke-width="1.83" stroke-linecap="round" stroke-linejoin="round"/></g></svg>
<div class="t" style="left:714px;top:887.93px;font-size:16.5px;color:#101828;font-weight:400;letter-spacing:0.2px;-webkit-text-stroke:0.3px #101828">Demo Email</div>
<div class="t" style="left:973.5px;top:889.26px;font-size:16px;color:#667085;font-weight:400;letter-spacing:0.1px;">Draft Email</div>
<div class="t" style="left:1123px;top:878.46px;font-size:16px;color:#475467;font-weight:400;letter-spacing:0.7px;-webkit-text-stroke:0.25px #475467">Jun 18, 2025 04:04</div>
<div class="t" style="left:1123px;top:900.46px;font-size:16px;color:#475467;font-weight:400;letter-spacing:0.5px;-webkit-text-stroke:0.25px #475467">pm</div>
<div style="position:absolute;left:1558px;top:883px;width:71px;height:25px;background:#f9fafb;border-radius:13px"></div>
<svg style="position:absolute;left:1566px;top:886.2px;" width="20" height="20" viewBox="0 0 20 20" fill="none"><g transform="scale(0.78)"><path d="M11 4H7.8C6.12 4 5.28 4 4.64 4.33C4.07 4.61 3.61 5.07 3.33 5.64C3 6.28 3 7.12 3 8.8V16.2C3 17.88 3 18.72 3.33 19.36C3.61 19.930 4.07 20.39 4.64 20.67C5.28 21 6.12 21 7.8 21H15.2C16.88 21 17.72 21 18.36 20.67C18.93 20.39 19.39 19.93 19.67 19.36C20 18.72 20 17.88 20 16.2V13M9 15H10.67C11.16 15 11.4 15 11.63 14.94C11.84 14.89 12.03 14.81 12.21 14.7C12.41 14.58 12.58 14.41 12.93 14.06L22.5 4.5C23.33 3.67 23.33 2.33 22.5 1.5C21.67 0.67 20.33 0.67 19.5 1.5L9.93 11.07C9.58 11.42 9.41 11.59 9.29 11.79C9.18 11.97 9.1 12.16 9.050 12.37C9 12.6 9 12.84 9 13.32V15Z" stroke="#344054" stroke-width="2.05" stroke-linecap="round" stroke-linejoin="round"/></g></svg>
<div class="t" style="left:1589px;top:888.83px;font-size:14.5px;color:#344054;font-weight:400;letter-spacing:0.1px;-webkit-text-stroke:0.3px #344054">Draft</div>
<div style="position:absolute;left:1700.2px;top:889.2px;width:3.6px;height:3.6px;background:#1d2939;border-radius:50%"></div>
<div style="position:absolute;left:1700.2px;top:895.7px;width:3.6px;height:3.6px;background:#1d2939;border-radius:50%"></div>
<div style="position:absolute;left:1700.2px;top:902.2px;width:3.6px;height:3.6px;background:#1d2939;border-radius:50%"></div>
<div style="position:absolute;left:644px;top:908px;width:1104px;height:3px;background:#fff"></div>
<div style="position:absolute;left:1299.5px;top:526px;width:363px;height:72.5px;border:7.8px solid #ff0000;border-radius:9px;box-sizing:border-box"></div>
<div style="position:absolute;left:232.5px;top:871px;width:23.5px;height:23.5px;background:#35c98f;border-radius:50%"></div>
<svg style="position:absolute;left:236px;top:875px;" width="16" height="16" viewBox="0 0 16 16" fill="none"><path d="M9.6 3.6 L5.4 8 L9.6 12.4" stroke="#1e3a2f" stroke-width="1.6" stroke-linecap="round" stroke-linejoin="round"/></svg>
</body></html>
